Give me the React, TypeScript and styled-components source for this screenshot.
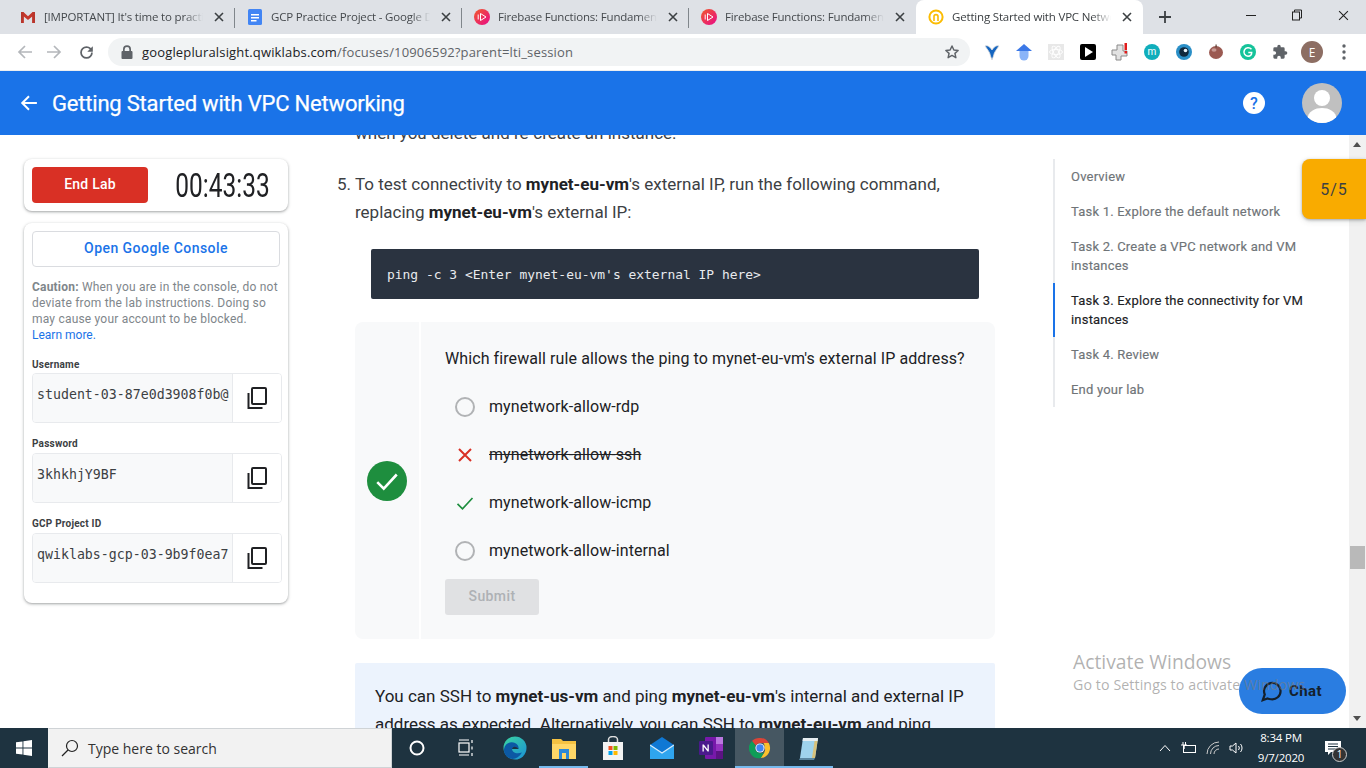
import React from "react";
import styled, { createGlobalStyle } from "styled-components";

const Global = createGlobalStyle`
  html, body { margin: 0; padding: 0; width: 1366px; height: 768px; overflow: hidden; background: #fff; }
  * { box-sizing: border-box; }
`;

const Screen = styled.div`
  width: 1366px; height: 768px; display: flex; flex-direction: column; overflow: hidden;
  font-family: Roboto, "Liberation Sans", sans-serif; position: relative;
`;

/* ---------- browser chrome ---------- */
const TabStrip = styled.div`
  height: 34px; background: #dee1e6; display: flex; padding-left: 8px; flex: none;
`;
const Tab = styled.div<{ $active?: boolean; $sep?: boolean }>`
  width: 227px; height: 34px; display: flex; align-items: center; padding: 0 8px 0 12px; gap: 8px;
  position: relative; background: ${p => (p.$active ? "#fff" : "transparent")};
  border-radius: ${p => (p.$active ? "8px 8px 0 0" : "0")};
  &::after {
    content: ""; position: absolute; right: 0; top: 8px; height: 20px; width: 1px;
    background: ${p => (p.$sep ? "#80868b" : "transparent")};
  }
`;
const TabFavicon = styled.span`
  width: 16px; height: 16px; display: flex; flex: none;
`;
const TabTitle = styled.span<{ $active?: boolean }>`
  flex: 1; min-width: 0; white-space: nowrap; overflow: hidden; font-family: "Open Sans", sans-serif;
  font-size: 11.5px; letter-spacing: -.18px; margin-top: -1px; color: ${p => (p.$active ? "#3c4043" : "#45494d")};
  -webkit-mask-image: linear-gradient(90deg, #000 88%, transparent 100%);
  mask-image: linear-gradient(90deg, #000 88%, transparent 100%);
`;
const TabClose = styled.span`
  width: 16px; height: 16px; flex: none; display: flex; align-items: center; justify-content: center; color: #3c4043;
`;
const NewTab = styled.div`
  width: 44px; display: flex; align-items: center; justify-content: center; color: #3c4043;
`;
const WindowControls = styled.div`
  margin-left: auto; display: flex; align-items: flex-start;
`;
const WindowButton = styled.div`
  width: 46px; height: 30px; display: flex; align-items: center; justify-content: center; color: #222;
`;
const Toolbar = styled.div`
  height: 37px; background: #fff; display: flex; align-items: center; padding: 0 8px 0 10px; flex: none;
  border-bottom: 1px solid #eceef0;
`;
const NavIcon = styled.span<{ $w: number }>`
  width: ${p => p.$w}px; height: 28px; display: flex; align-items: center; justify-content: center; flex: none;
`;
const AddressBar = styled.div`
  margin-left: 4px; width: 862px; height: 28px; border-radius: 14px; background: #f1f3f4; display: flex; align-items: center;
  padding: 0 10px 0 13px; flex: none;
`;
const Url = styled.span`
  font-family: "Open Sans", sans-serif; font-size: 13px; color: #5f6368; margin-left: 9px; flex: 1; letter-spacing: .16px;
  b { font-weight: 400; color: #202124; }
`;
const Extensions = styled.div`
  display: flex; align-items: center; margin-left: 6px;
`;
const ExtSlot = styled.span`
  width: 32px; height: 28px; display: flex; align-items: center; justify-content: center; position: relative;
`;
const UserDot = styled.span`
  width: 22px; height: 22px; border-radius: 50%; background: #8d6e63; color: #fff; font: 400 12px "Open Sans", sans-serif;
  display: flex; align-items: center; justify-content: center;
`;

/* ---------- app bar ---------- */
const AppBar = styled.header`
  height: 64px; background: #1a73e8; display: flex; align-items: center; color: #fff; padding: 0 24px 0 20px; flex: none;
`;
const AppTitle = styled.h1`
  margin: 0 0 0 14px; font: 400 22px Roboto, sans-serif; letter-spacing: -.2px; -webkit-text-stroke: .25px #fff; flex: 1; color: #fff;
`;
const HelpDot = styled.span`
  width: 22px; height: 22px; border-radius: 50%; background: #fff; color: #1a73e8; font: 500 16px Roboto, sans-serif;
  display: flex; align-items: center; justify-content: center; margin-right: 37px;
`;
const Avatar = styled.span`
  width: 40px; height: 40px; border-radius: 50%; background: #c0c0c0; overflow: hidden; display: block;
`;

/* ---------- page ---------- */
const Body = styled.main`
  flex: 1; min-height: 0; display: flex; position: relative; overflow: hidden;
`;
const Side = styled.aside`
  width: 264px; margin: 24px 0 0 24px; flex: none; display: flex; flex-direction: column; gap: 12px;
`;
const Card = styled.section`
  background: #fff; border-radius: 8px; padding: 8px;
  box-shadow: 0 1px 2px rgba(60,64,67,.3), 0 1px 3px 1px rgba(60,64,67,.15);
`;
const TimerCard = styled(Card)`
  display: flex; align-items: center; height: 52px;
`;
const EndLab = styled.div`
  width: 116px; height: 36px; padding-bottom: 2px; background: #d93025; color: #fff; border-radius: 4px; display: flex; align-items: center;
  justify-content: center; font: 500 14px Roboto, sans-serif; letter-spacing: .2px; flex: none;
`;
const TimerWrap = styled.div`
  flex: 1; display: flex; justify-content: center; padding-left: 9px;
`;
const Timer = styled.div`
  font: 400 34px Roboto, sans-serif; color: #202124; transform: scaleX(.72); white-space: nowrap;
`;
const LabCard = styled(Card)`
  padding: 8px 6px 20px 8px; height: 380px;
`;
const ConsoleButton = styled.div`
  width: 248px; height: 36px; padding-bottom: 2px; border: 1px solid #dadce0; border-radius: 4px; color: #1a73e8; font: 500 14px Roboto, sans-serif;
  display: flex; align-items: center; justify-content: center; letter-spacing: .45px;
`;
const Caution = styled.p`
  margin: 12px 0 0; width: 250px; font: 400 12px/16px Roboto, sans-serif; color: #80868b; letter-spacing: .2px;
  b { font-weight: 700; }
`;
const LearnMore = styled.a`
  display: block; color: #1a73e8; letter-spacing: 0;
`;
const FieldLabel = styled.div<{ $first?: boolean }>`
  font: 700 10px/12px Roboto, sans-serif; color: #3c4043; margin-top: ${p => (p.$first ? "16px" : "15px")}; margin-bottom: ${p => (p.$first ? "2px" : "3px")};
  letter-spacing: .22px; height: 12px;
`;
const Field = styled.div`
  width: 250px; height: 50px; border: 1px solid #e8eaed; border-radius: 4px; display: flex; overflow: hidden;
`;
const FieldValue = styled.div`
  width: 200px; background: #f8f9fa; padding: 13px 0 0 4px; flex: none; border-right: 1px solid #e8eaed;
`;
const FieldText = styled.div`
  width: 192px; overflow: hidden; white-space: nowrap; font: 400 13.25px "DejaVu Sans Mono", "Liberation Mono", monospace; color: #3c4043;
`;
const CopyButton = styled.div`
  flex: 1; display: flex; align-items: center; justify-content: center; color: #202124; background: #fff;
`;

const Article = styled.article`
  width: 658px; margin: -16px 0 0 49px; flex: none; font: 400 17px/28px Roboto, sans-serif; color: #3c4043;
  b { font-weight: 700; color: #202124; }
`;
const LeadLine = styled.p`
  margin: 0 0 23px 18px;
`;
const Step = styled.div`
  display: flex; gap: 7px;
`;
const StepNumber = styled.span`
  width: 11px; flex: none;
`;
const StepText = styled.p`
  margin: 0; flex: 1;
`;
const CodeBlock = styled.pre`
  margin: 23px 16px 0 34px; height: 50px; background: #2a3340; color: #e8eaed; border-radius: 2px;
  font: 400 12.95px/50px "DejaVu Sans Mono", "Liberation Mono", monospace; padding: 1px 16px 0;
`;
const Quiz = styled.section`
  margin: 23px 0 0 18px; height: 317px; background: #f8f9fa; border-radius: 8px; display: flex; overflow: hidden;
  font-size: 16px;
`;
const QuizStatus = styled.div`
  width: 66px; flex: none; border-right: 2px solid #fff; display: flex; align-items: center; justify-content: center; padding-top: 1px;
`;
const StatusBadge = styled.span`
  width: 40px; height: 40px; border-radius: 50%; background: #1e8e3e; display: flex; align-items: center; justify-content: center;
`;
const QuizBody = styled.div`
  flex: 1; padding: 23px 0 0 24px; color: #202124; letter-spacing: .09px;
`;
const Question = styled.div`
  height: 28px; line-height: 28px;
`;
const Options = styled.div`
  margin-top: 10px; display: flex; flex-direction: column;
`;
const Option = styled.div`
  height: 48px; display: flex; align-items: center; gap: 14px; padding-left: 10px;
`;
const OptionMark = styled.span`
  width: 20px; height: 20px; display: flex; align-items: center; justify-content: center; flex: none;
`;
const Radio = styled.span`
  width: 20px; height: 20px; border-radius: 50%; border: 2px solid #b1b3b5; display: block;
`;
const OptionText = styled.span<{ $struck?: boolean }>`
  text-decoration: ${p => (p.$struck ? "line-through" : "none")}; color: #202124;
`;
const SubmitButton = styled.div`
  margin-top: 4px; width: 94px; height: 36px; padding-bottom: 2px; background: #e0e1e3; color: #aeb1b5; border-radius: 3px; font: 500 14px Roboto, sans-serif;
  display: flex; align-items: center; justify-content: center; letter-spacing: .4px;
`;
const Note = styled.section`
  margin: 24px 0 0 18px; height: 120px; background: #ecf3fd; border-radius: 2px; padding: 19px 20px; color: #202124;
  b { color: #202124; }
`;

const TaskNav = styled.nav`
  width: 296px; margin: 24px 0 0 58px; flex: none; align-self: flex-start; border-left: 2px solid #e8eaed;
`;
const TaskItem = styled.div<{ $active?: boolean }>`
  font: 400 13px/19px Roboto, sans-serif; letter-spacing: .2px; padding: 8px 40px 8px 16px; color: ${p => (p.$active ? "#202124" : "#6f7478")};
  -webkit-text-stroke: .15px currentColor;
  position: relative;
  &::before {
    content: ""; position: absolute; left: -2px; top: 0; bottom: 0; width: 2px; background: ${p => (p.$active ? "#1a73e8" : "transparent")};
  }
`;
const Scrollbar = styled.div`
  width: 17px; flex: none; background: #f1f1f1; position: relative; margin-left: auto;
`;
const ScrollThumb = styled.div`
  position: absolute; left: 1px; right: 1px; top: 411px; height: 23px; background: #b9b9b9;
`;
const ScrollArrow = styled.span<{ $down?: boolean }>`
  position: absolute; left: 4px; width: 0; height: 0; border-left: 4px solid transparent; border-right: 4px solid transparent;
  ${p => (p.$down ? "bottom: 7px; border-top: 5px solid #505050;" : "top: 7px; border-bottom: 5px solid #505050;")}
`;
const ScoreBadge = styled.div`
  position: absolute; top: 24px; right: 0; width: 64px; height: 60px; background: #f9ab00; border-radius: 8px 0 0 8px; color: #3c4043;
  font: 400 16px Roboto, sans-serif; letter-spacing: 1px; display: flex; align-items: center; justify-content: center;
  box-shadow: 0 1px 3px rgba(60,64,67,.4), 0 2px 6px rgba(60,64,67,.15);
`;
const Watermark = styled.div`
  position: absolute; left: 1073px; top: 514px; font-family: "Open Sans", sans-serif; color: rgba(125,125,125,.6); white-space: nowrap; z-index: 3;
  div:first-child { font-size: 19.3px; line-height: 26px; }
  div:last-child { font-size: 14.2px; line-height: 20px; letter-spacing: .1px; }
`;
const ChatButton = styled.div`
  position: absolute; left: 1239px; top: 533px; width: 107px; height: 46px; border-radius: 23px; background: #2a7de1;
  display: flex; align-items: center; padding-left: 21px; gap: 7px; font: 700 15px Roboto, sans-serif; letter-spacing: .4px; color: #14202c; z-index: 2;
`;

/* ---------- taskbar ---------- */
const Taskbar = styled.footer`
  height: 40px; background: #1e3340; display: flex; align-items: center; flex: none; color: #fff;
`;
const StartButton = styled.div`
  width: 48px; height: 40px; display: flex; align-items: center; justify-content: center;
`;
const SearchBox = styled.div`
  width: 344px; height: 40px; background: #f2f2f2; display: flex; align-items: center; padding-left: 12px; gap: 9px;
  border: 1px solid #cfd3d6; border-left-color: #f2f2f2; color: #333; font: 400 14px "Open Sans", sans-serif;
`;
const TaskApps = styled.div`
  display: flex; margin-left: 0;
`;
const TaskApp = styled.div<{ $open?: boolean; $focus?: boolean }>`
  width: 49px; height: 40px; display: flex; align-items: center; justify-content: center; position: relative;
  background: ${p => (p.$focus ? "rgba(255,255,255,.18)" : "transparent")};
  &::after {
    content: ""; position: absolute; left: 0; right: 0; bottom: 0; height: 2px; background: ${p => (p.$open ? "#76b9ed" : "transparent")};
  }
`;
const Tray = styled.div`
  margin-left: auto; display: flex; align-items: center; height: 40px;
`;
const TrayIcon = styled.span`
  width: 24px; display: flex; align-items: center; justify-content: center;
`;
const Clock = styled.div`
  width: 64px; text-align: center; font: 400 11.5px/20px "Open Sans", sans-serif; color: #fff; letter-spacing: -.2px;
`;
const Notify = styled.div`
  width: 40px; margin-right: 13px; display: flex; justify-content: center; position: relative;
`;
const NotifyCount = styled.span`
  position: absolute; right: 6px; bottom: -7px; width: 15px; height: 15px; border-radius: 50%; background: #333; border: 1px solid #ccc;
  font: 400 10px/13px "Open Sans", sans-serif; text-align: center; color: #fff;
`;

/* ---------- icons ---------- */
const X = ({ size = 10, w = 1.6 }: { size?: number; w?: number }) => (
  <svg width={size} height={size} viewBox="0 0 10 10" fill="none" stroke="currentColor" strokeWidth={w}><path d="M1 1l8 8M9 1l-8 8" /></svg>
);
const GmailIcon = () => (
  <svg width="16" height="16" viewBox="0 0 16 16"><path d="M1 3h2.4L8 7.2 12.6 3H15v11h-2.8V7.4L8 11 3.8 7.4V14H1z" fill="#c5372c" /><path d="M1 3h2.4v11H1zM12.6 3H15v11h-2.6z" fill="#b8362c" /></svg>
);
const DocsIcon = () => (
  <svg width="16" height="16" viewBox="0 0 16 16"><rect x="1" y="0" width="14" height="16" rx="1.5" fill="#4285f4" /><path d="M4 5h8v1.4H4zM4 8h8v1.4H4zM4 11h5.5v1.4H4z" fill="#fff" /></svg>
);
const PluralIcon = () => (
  <svg width="16" height="16" viewBox="0 0 16 16"><defs><linearGradient id="pg" x1="0" y1="0" x2="1" y2="1"><stop offset="0" stopColor="#f15b2a" /><stop offset="1" stopColor="#e80a89" /></linearGradient></defs><circle cx="8" cy="8" r="8" fill="url(#pg)" /><path d="M6.5 4.5L12 8l-5.5 3.5z" fill="none" stroke="#fff" strokeWidth="1" /><path d="M4.2 5.5v5" stroke="#fff" strokeWidth="1" /></svg>
);
const QwikIcon = () => (
  <svg width="16" height="16" viewBox="0 0 16 16" fill="none"><circle cx="8" cy="8" r="6.6" stroke="#fbbc04" strokeWidth="2" /><path d="M6 12V7.6a2 2 0 014 0V12" stroke="#fbbc04" strokeWidth="1.6" /></svg>
);
const Arrow = ({ color, flip, size = 16, w = 1.7 }: { color: string; flip?: boolean; size?: number; w?: number }) => (
  <svg width={size} height={size} viewBox="0 0 16 16" fill="none" stroke={color} strokeWidth={w} transform={flip ? "scale(-1 1)" : undefined}><path d="M15 8H2M8 2L2 8l6 6" /></svg>
);
const Reload = () => (
  <svg width="19" height="19" viewBox="0 0 24 24" fill="#5f6368"><path d="M17.65 6.35A7.96 7.96 0 0012 4a8 8 0 108 8h-2.2A5.8 5.8 0 1112 6.2c1.6 0 3 .65 4.05 1.75L13 11h7V4z" /></svg>
);
const Lock = () => (
  <svg width="12" height="14" viewBox="0 0 12 14" fill="#5f6368"><path d="M2 6V4.2a4 4 0 018 0V6h.6c.5 0 .9.4.9.9v6.2c0 .5-.4.9-.9.9H1.4a.9.9 0 01-.9-.9V6.900c0-.5.4-.9.9-.9zm1.700 0h4.600V4.200a2.300 2.300 0 00-4.600 0z" /></svg>
);
const Star = () => (
  <svg width="16" height="16" viewBox="0 0 24 24" fill="none" stroke="#5f6368" strokeWidth="2.200" strokeLinejoin="round"><path d="M12 3l2.800 6 6.400.7-4.800 4.400 1.400 6.400L12 17.200 6.200 20.500l1.400-6.400-4.800-4.400 6.400-.7z" /></svg>
);
const Puzzle = () => (
  <svg width="16" height="16" viewBox="0 0 24 24" fill="#5f6368"><path d="M20.500 11H19V7a2 2 0 00-2-2h-4V3.500a2.500 2.500 0 00-5 0V5H4a2 2 0 00-2 2v3.800h1.500a2.700 2.700 0 010 5.400H2V20a2 2 0 002 2h3.800v-1.500a2.700 2.700 0 015.400 0V22H17a2 2 0 002-2v-4h1.500a2.500 2.500 0 000-5z" /></svg>
);
const Kebab = () => (
  <svg width="4" height="16" viewBox="0 0 4 16" fill="#5f6368"><circle cx="2" cy="2" r="1.700" /><circle cx="2" cy="8" r="1.700" /><circle cx="2" cy="14" r="1.700" /></svg>
);
const Ext = {
  Y: () => <svg width="16" height="18" viewBox="0 0 16 18"><path d="M1 3c3-1 5 1 7 4 2-3 4-5 7-4-2 3-5 6-5.500 10L8 17l-1.500-4C6 9 3 6 1 3z" fill="#1565c0" stroke="#ddd" strokeWidth=".8" /></svg>,
  Cap: () => <svg width="18" height="18" viewBox="0 0 18 18"><path d="M9 1l8 7H1z" fill="#3b78e7" /><path d="M4.500 8h9v5a4.500 4.500 0 01-9 0z" fill="#8ab4f8" /></svg>,
  Atom: () => <svg width="16" height="16" viewBox="0 0 16 16"><rect width="16" height="16" fill="#e8e8e8" /><g fill="none" stroke="#fff" strokeWidth=".9"><ellipse cx="8" cy="8" rx="6.500" ry="2.600" /><ellipse cx="8" cy="8" rx="6.500" ry="2.600" transform="rotate(60 8 8)" /><ellipse cx="8" cy="8" rx="6.500" ry="2.600" transform="rotate(120 8 8)" /></g></svg>,
  Play: () => <svg width="16" height="16" viewBox="0 0 16 16"><rect width="16" height="16" rx="2" fill="#000" /><path d="M5 3l8 5-8 5z" fill="#fff" /></svg>,
  Clip: () => <svg width="18" height="18" viewBox="0 0 18 18"><path d="M6 2h6v6h4v5H10v4H5v-5H1V7h5z" fill="#e2e2e2" stroke="#8a8a8a" strokeWidth="1" /><rect x="13.500" y="0" width="2.500" height="7" fill="#e01b1b" /><rect x="13.500" y="8" width="2.500" height="2.500" fill="#e01b1b" /></svg>,
  M: () => <svg width="16" height="16" viewBox="0 0 16 16"><circle cx="8" cy="8" r="8" fill="#10aebb" /><text x="8" y="11" textAnchor="middle" fill="#fff" fontSize="10" fontFamily="Roboto">m</text></svg>,
  Eye: () => <svg width="16" height="16" viewBox="0 0 16 16"><circle cx="8" cy="8" r="8" fill="#2a8fc7" /><circle cx="8" cy="8" r="4.800" fill="#10283c" /><circle cx="9.500" cy="6.500" r="1.800" fill="#e8f4fb" /></svg>,
  Apple: () => <svg width="16" height="16" viewBox="0 0 16 16"><ellipse cx="8" cy="8.500" rx="7" ry="6.500" fill="#9b5a52" /><ellipse cx="6" cy="6" rx="2.500" ry="1.800" fill="#c79a94" /><rect x="7.500" y="0.500" width="1.200" height="3" fill="#5d4037" /></svg>,
  G: () => <svg width="16" height="16" viewBox="0 0 16 16"><circle cx="8" cy="8" r="8" fill="#15c39a" /><path d="M11.500 5.200A4.300 4.300 0 108 12.300c2.200 0 3.700-1.500 3.700-3.700H8.300" fill="none" stroke="#fff" strokeWidth="1.500" /></svg>,
};
const Copy = () => (
  <svg width="24" height="24" viewBox="0 0 24 24" fill="none" stroke="currentColor" strokeWidth="2"><path d="M3.500 7v15h14" /><rect x="7" y="2" width="14" height="16" rx="1" /></svg>
);
const Check = ({ color, size, w }: { color: string; size: number; w: number }) => (
  <svg width={size} height={size} viewBox="0 0 24 24" fill="none" stroke={color} strokeWidth={w}><path d="M3 13l6 6L21 6" /></svg>
);
const ChatBubble = () => (
  <svg width="22" height="22" viewBox="0 0 24 24" fill="none" stroke="#14202c" strokeWidth="2.400"><path d="M3 22l2.200-6.200A9 9 0 1112 21a9 9 0 01-3.800-.8z" /></svg>
);
const WinLogo = () => (
  <svg width="16" height="16" viewBox="0 0 16 16" fill="#fff"><path d="M0 2.300L6.500 1.400V7.500H0zM7.400 1.300L16 0v7.500H7.400zM0 8.400h6.500v6.200L0 13.700zM7.400 8.400H16V16l-8.600-1.300z" /></svg>
);
const SearchGlass = () => (
  <svg width="18" height="18" viewBox="0 0 18 18" fill="none" stroke="#222" strokeWidth="1.200"><circle cx="11" cy="7" r="5.500" /><path d="M7 11l-6 6" /></svg>
);
const TaskView = () => (
  <svg width="16" height="18" viewBox="0 0 16 18" fill="none" stroke="#fff" strokeWidth="1.200"><rect x="1" y="4" width="10" height="9" /><path d="M1 1h10M1 16h10M14 1v3M14 7.500v3M14 14v3" /></svg>
);
const Edge = () => (
  <svg width="24" height="24" viewBox="0 0 24 24"><defs><linearGradient id="e1" x1="0" y1="0" x2="1" y2="1"><stop offset="0" stopColor="#3bd6a0" /><stop offset="1" stopColor="#1a8fd8" /></linearGradient></defs><circle cx="12" cy="12" r="11.500" fill="url(#e1)" /><path d="M1 13C2 7 8 5 12 7c3 1.500 4 4 3.500 6H9c0 3 4 5.500 10 3.500C16 22 11 24 7 22.500 3 21 0.500 17 1 13z" fill="#0c59a4" /><path d="M9 13.500c.5-3 3.500-4 6.500-.5H9z" fill="#1e3340" /></svg>
);
const Folder = () => (
  <svg width="24" height="22" viewBox="0 0 24 22"><path d="M0 2h9l2 2h13v18H0z" fill="#f5c242" /><path d="M0 7h24v15H0z" fill="#ffd767" /><rect x="7" y="12" width="10" height="10" fill="#2b88d8" /><rect x="10" y="16" width="4" height="6" fill="#ffd767" /></svg>
);
const Store = () => (
  <svg width="22" height="24" viewBox="0 0 22 24"><path d="M1 6h20v18H1z" fill="#f3f3f3" /><path d="M6.500 6V3.500a4.500 3 0 019 0V6" fill="none" stroke="#ddd" strokeWidth="1.500" /><rect x="6.500" y="10" width="4" height="4" fill="#f25022" /><rect x="11.500" y="10" width="4" height="4" fill="#7fba00" /><rect x="6.500" y="15" width="4" height="4" fill="#00a4ef" /><rect x="11.500" y="15" width="4" height="4" fill="#ffb900" /></svg>
);
const Mail = () => (
  <svg width="24" height="24" viewBox="0 0 24 24"><path d="M12 1L24 9v14H0V9z" fill="#0f78d4" /><path d="M0 9h24v14H0z" fill="#2fa5ef" /><path d="M0 9l12 8 12-8" fill="#0f78d4" stroke="#d6ecfb" strokeWidth="1.200" /></svg>
);
const OneNote = () => (
  <svg width="24" height="22" viewBox="0 0 24 22"><rect x="6" y="0" width="18" height="22" rx="1" fill="#7719aa" /><rect x="17" y="0" width="7" height="7" fill="#ba77e0" /><rect x="17" y="7" width="7" height="7" fill="#9332bf" /><rect x="17" y="14" width="7" height="8" fill="#5c1384" /><rect x="0" y="4" width="14" height="14" rx="1" fill="#4a1a8c" /><path d="M3.500 14.500v-7h1.300l3.700 4.800V7.500h1.300v7H8.600L4.800 9.700v4.800z" fill="#fff" /></svg>
);
const Chrome = () => (
  <svg width="22" height="22" viewBox="0 0 24 24"><path d="M12 1a11 11 0 019.530 5.500H12a5.500 5.500 0 00-4.760 2.750L3.200 4.400A11 11 0 0112 1z" fill="#db4437" /><path d="M21.530 6.500A11 11 0 0112.800 23l4-6.500a5.500 5.500 0 000-5.500 5.500 5.500 0 00-1-4.500z" fill="#fbc02d" /><path d="M3.200 4.400l4.040 4.850a5.500 5.500 0 004.760 8.250 5.500 5.500 0 004.800-1l-4 6.500A11 11 0 013.200 4.400z" fill="#0f9d58" /><circle cx="12" cy="12" r="5" fill="#fff" /><circle cx="12" cy="12" r="4" fill="#4285f4" /></svg>
);
const Notepad = () => (
  <svg width="24" height="26" viewBox="0 0 24 26"><path d="M6 3h15l-3 20H3z" fill="#9fd3ec" /><path d="M18 3h3l-3 20h-3z" fill="#d8c27a" /><path d="M6 3h15l-.4 3H5.500z" fill="#e6eef2" /><path d="M3 23h15l-1 2H2z" fill="#5b87a0" /></svg>
);

const tabs = [
  { icon: <GmailIcon />, title: "[IMPORTANT] It's time to practice what you've learned" },
  { icon: <DocsIcon />, title: "GCP Practice Project - Google Docs" },
  { icon: <PluralIcon />, title: "Firebase Functions: Fundamentals" },
  { icon: <PluralIcon />, title: "Firebase Functions: Fundamentals" },
];
const extensions = [<Ext.Y />, <Ext.Cap />, <Ext.Atom />, <Ext.Play />, <Ext.Clip />, <Ext.M />, <Ext.Eye />, <Ext.Apple />, <Ext.G />, <Puzzle />];
const fields = [
  { label: "Username", value: "student-03-87e0d3908f0b@qwiklabs.net" },
  { label: "Password", value: "3khkhjY9BF" },
  { label: "GCP Project ID", value: "qwiklabs-gcp-03-9b9f0ea7" },
];
const taskItems = [
  { text: "Overview" },
  { text: "Task 1. Explore the default network" },
  { text: "Task 2. Create a VPC network and VM instances" },
  { text: "Task 3. Explore the connectivity for VM instances", active: true },
  { text: "Task 4. Review" },
  { text: "End your lab" },
];

export default function App() {
  return (
    <Screen>
      <Global />
      <TabStrip>
        {tabs.map((t, i) => (
          <Tab key={i} $sep={i < 3}>
            <TabFavicon>{t.icon}</TabFavicon>
            <TabTitle>{t.title}</TabTitle>
            <TabClose><X /></TabClose>
          </Tab>
        ))}
        <Tab $active>
          <TabFavicon><QwikIcon /></TabFavicon>
          <TabTitle $active>Getting Started with VPC Networking</TabTitle>
          <TabClose><X /></TabClose>
        </Tab>
        <NewTab>
          <svg width="12" height="12" viewBox="0 0 12 12" stroke="currentColor" strokeWidth="1.800"><path d="M6 0v12M0 6h12" /></svg>
        </NewTab>
        <WindowControls>
          <WindowButton><svg width="10" height="10" viewBox="0 0 10 10" stroke="#222"><path d="M0 5.500h10" /></svg></WindowButton>
          <WindowButton><svg width="10" height="12" viewBox="0 0 10 12" fill="none" stroke="#222"><rect x=".5" y="3" width="7" height="8" /><path d="M2.500 3V1h7v8h-2" /></svg></WindowButton>
          <WindowButton><X size={11} w={1} /></WindowButton>
        </WindowControls>
      </TabStrip>
      <Toolbar>
        <NavIcon $w={30}><Arrow color="#b4b7bb" /></NavIcon>
        <NavIcon $w={28}><Arrow color="#b4b7bb" flip /></NavIcon>
        <NavIcon $w={36}><Reload /></NavIcon>
        <AddressBar>
          <Lock />
          <Url><b>googlepluralsight.qwiklabs.com</b>/focuses/10906592?parent=lti_session</Url>
          <Star />
        </AddressBar>
        <Extensions>
          {extensions.map((e, i) => <ExtSlot key={i}>{e}</ExtSlot>)}
          <ExtSlot><UserDot>E</UserDot></ExtSlot>
          <ExtSlot><Kebab /></ExtSlot>
        </Extensions>
      </Toolbar>
      <AppBar>
        <Arrow color="#fff" size={18} w={1.8} />
        <AppTitle>Getting Started with VPC Networking</AppTitle>
        <HelpDot>?</HelpDot>
        <Avatar>
          <svg width="40" height="40" viewBox="0 0 40 40" fill="#fff"><circle cx="20" cy="15" r="8" /><path d="M5 37c1-9 8-12 15-12s14 3 15 12v3H5z" /></svg>
        </Avatar>
      </AppBar>
      <Body>
        <Side>
          <TimerCard>
            <EndLab>End Lab</EndLab>
            <TimerWrap><Timer>00:43:33</Timer></TimerWrap>
          </TimerCard>
          <LabCard>
            <ConsoleButton>Open Google Console</ConsoleButton>
            <Caution>
              <b>Caution:</b> When you are in the console, do not deviate from the lab instructions. Doing so may cause your account to be blocked.
              <LearnMore>Learn more.</LearnMore>
            </Caution>
            {fields.map((f, i) => (
              <React.Fragment key={f.label}>
                <FieldLabel $first={i === 0}>{f.label}</FieldLabel>
                <Field>
                  <FieldValue><FieldText>{f.value}</FieldText></FieldValue>
                  <CopyButton><Copy /></CopyButton>
                </Field>
              </React.Fragment>
            ))}
          </LabCard>
        </Side>
        <Article>
          <LeadLine>when you delete and re-create an instance.</LeadLine>
          <Step>
            <StepNumber>5.</StepNumber>
            <StepText>To test connectivity to <b>mynet-eu-vm</b>'s external IP, run the following command, replacing <b>mynet-eu-vm</b>'s external IP:</StepText>
          </Step>
          <CodeBlock>ping -c 3 &lt;Enter mynet-eu-vm's external IP here&gt;</CodeBlock>
          <Quiz>
            <QuizStatus><StatusBadge><Check color="#fff" size={26} w={2.4} /></StatusBadge></QuizStatus>
            <QuizBody>
              <Question>Which firewall rule allows the ping to mynet-eu-vm's external IP address?</Question>
              <Options>
                <Option><OptionMark><Radio /></OptionMark><OptionText>mynetwork-allow-rdp</OptionText></Option>
                <Option><OptionMark><svg width="16" height="16" viewBox="0 0 16 16" stroke="#d93025" strokeWidth="2"><path d="M2 2l12 12M14 2L2 14" /></svg></OptionMark><OptionText $struck>mynetwork-allow-ssh</OptionText></Option>
                <Option><OptionMark><Check color="#1e8e3e" size={20} w={2} /></OptionMark><OptionText>mynetwork-allow-icmp</OptionText></Option>
                <Option><OptionMark><Radio /></OptionMark><OptionText>mynetwork-allow-internal</OptionText></Option>
              </Options>
              <SubmitButton>Submit</SubmitButton>
            </QuizBody>
          </Quiz>
          <Note>
            You can SSH to <b>mynet-us-vm</b> and ping <b>mynet-eu-vm</b>'s internal and external IP address as expected. Alternatively, you can SSH to <b>mynet-eu-vm</b> and ping
          </Note>
        </Article>
        <TaskNav>
          {taskItems.map(t => <TaskItem key={t.text} $active={t.active}>{t.text}</TaskItem>)}
        </TaskNav>
        <Scrollbar>
          <ScrollArrow />
          <ScrollThumb />
          <ScrollArrow $down />
        </Scrollbar>
        <ScoreBadge>5/5</ScoreBadge>
        <ChatButton><ChatBubble />Chat</ChatButton>
        <Watermark>
          <div>Activate Windows</div>
          <div>Go to Settings to activate Windows.</div>
        </Watermark>
      </Body>
      <Taskbar>
        <StartButton><WinLogo /></StartButton>
        <SearchBox><SearchGlass />Type here to search</SearchBox>
        <TaskApps>
          <TaskApp><svg width="16" height="16" viewBox="0 0 16 16" fill="none" stroke="#fff" strokeWidth="2"><circle cx="8" cy="8" r="6.500" /></svg></TaskApp>
          <TaskApp><TaskView /></TaskApp>
          <TaskApp><Edge /></TaskApp>
          <TaskApp $open><Folder /></TaskApp>
          <TaskApp><Store /></TaskApp>
          <TaskApp><Mail /></TaskApp>
          <TaskApp><OneNote /></TaskApp>
          <TaskApp $open $focus><Chrome /></TaskApp>
          <TaskApp $open><Notepad /></TaskApp>
        </TaskApps>
        <Tray>
          <TrayIcon><svg width="12" height="8" viewBox="0 0 12 8" fill="none" stroke="#fff" strokeWidth="1"><path d="M1 7l5-5.500L11 7" /></svg></TrayIcon>
          <TrayIcon><svg width="16" height="12" viewBox="0 0 16 12" fill="none" stroke="#fff"><rect x="2.500" y="3.500" width="12" height="7" /><path d="M0 3h6M2 0v3M4.500 0v3M3.200 3v4" /></svg></TrayIcon>
          <TrayIcon><svg width="15" height="14" viewBox="0 0 15 14" fill="none" stroke="#ccc"><path d="M1 13A12 12 0 0113 1M4.500 13A8.500 8.500 0 0113 4.500M8 13a5 5 0 015-5" /></svg></TrayIcon>
          <TrayIcon><svg width="16" height="14" viewBox="0 0 16 14" fill="none" stroke="#fff"><path d="M1 5h2.500L7 2v10L3.500 9H1zM9.500 5a3 3 0 010 4M11.500 3a6 6 0 010 8" /></svg></TrayIcon>
          <Clock>8:34 PM<br />9/7/2020</Clock>
          <Notify>
            <svg width="16" height="14" viewBox="0 0 16 14" fill="#fff"><path d="M0 0h16v11H6l-3 3v-3H0z" /><path d="M3 3h10M3 5.500h10M3 8h10" stroke="#1e3340" /></svg>
            <NotifyCount>1</NotifyCount>
          </Notify>
        </Tray>
      </Taskbar>
    </Screen>
  );
}
